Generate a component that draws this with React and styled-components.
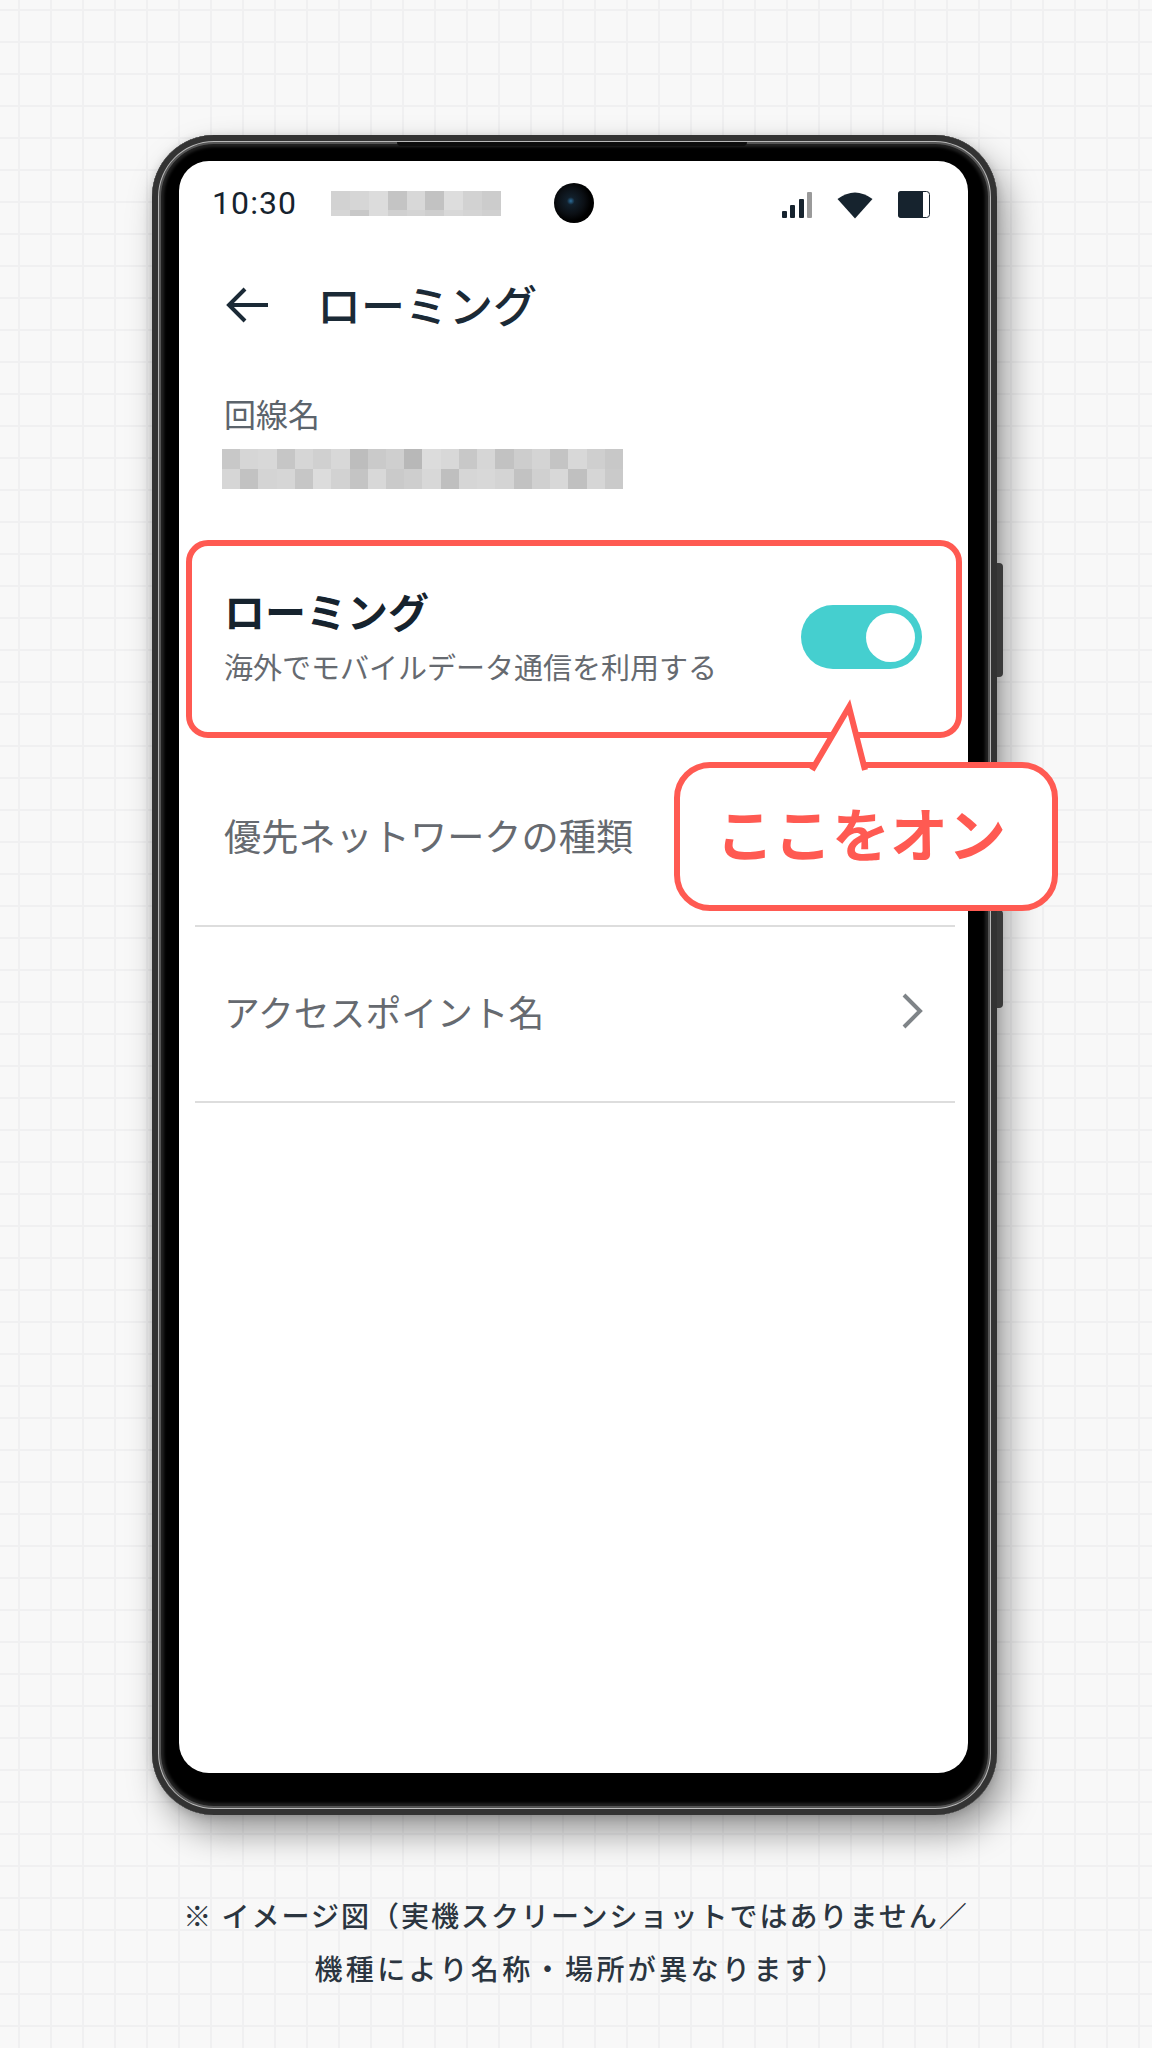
import styled, { createGlobalStyle } from "styled-components";

const JP = `"Noto Sans CJK JP", "Noto Sans", sans-serif`;
const RED = "#ff5a52";

const topShades = [
    ["#d2d2d2", "#d6d6d6", "#dcdcdc", "#c4c4c4", "#d8d8d8", "#c2c2c2", "#dddddd", "#d2d2d2", "#cccccc"],
    ["#d6d6d6", "#c8c8c8", "#dcdcdc", "#d0d0d0", "#d4d4d4", "#cecece", "#d8d8d8", "#d4d4d4", "#d0d0d0"],
];

const lineShades = [
    ["#c8c8c8", "#d6d6d6", "#d8d8d8", "#c6c6c6", "#d6d6d6", "#d0d0d0", "#d8d8d8", "#bdbdbd", "#cacaca", "#cfcfcf", "#b8b8b8", "#dcdcdc", "#d8d8d8", "#c8c8c8", "#d6d6d6", "#c2c2c2", "#cdcdcd", "#d4d4d4", "#c4c4c4", "#d8d8d8", "#cfcfcf", "#c8c8c8"],
    ["#d6d6d6", "#c2c2c2", "#d4d4d4", "#d6d6d6", "#c6c6c6", "#dcdcdc", "#d2d2d2", "#c4c4c4", "#d8d8d8", "#cacaca", "#cecece", "#d8d8d8", "#bfbfbf", "#d6d6d6", "#d8d8d8", "#d4d4d4", "#c2c2c2", "#d0d0d0", "#d8d8d8", "#c0c0c0", "#d6d6d6", "#cacaca"],
];

function Mosaic ({ rows, ...props }) {
    return (
        <MosaicGrid {...props} $cols={rows[0].length}>
            {rows.flat().map((shade, i) => <MosaicCell key={i} $shade={shade} />)}
        </MosaicGrid>
    );
};

export default function App () {
    return (
        <>
            <GlobalStyle />
            <Page>
                <Phone>
                    <EarSlit />
                    <SideButton $top={428} $height={114} />
                    <SideButton $top={775} $height={98} />
                    <Screen>
                        <StatusBar>
                            <Time>10:30</Time>
                            <CarrierMosaic rows={topShades} />
                            <Camera />
                            <StatusIcons>
                                <svg width="30" height="26" viewBox="0 0 30 26">
                                    <rect x="0" y="19" width="5" height="7" rx="1" fill="#16232e" />
                                    <rect x="8" y="13" width="5" height="13" rx="1" fill="#16232e" />
                                    <rect x="17" y="7" width="5" height="19" rx="1" fill="#16232e" />
                                    <rect x="25" y="0" width="5" height="26" rx="1" fill="#9a9a9a" />
                                </svg>
                                <svg width="36" height="28" viewBox="0 0 36 28">
                                    <path d="M18 27.5 L0.5 8 Q18 -5 35.5 8 Z" fill="#16232e" />
                                </svg>
                                <svg width="32" height="27" viewBox="0 0 32 27">
                                    <rect x="0.5" y="0.5" width="31" height="26" rx="3" fill="#fff" stroke="#16232e" />
                                    <path d="M3 0 H25 V27 H3 Q0 27 0 24 V3 Q0 0 3 0 Z" fill="#16232e" />
                                </svg>
                            </StatusIcons>
                        </StatusBar>

                        <TitleRow>
                            <svg width="42" height="36" viewBox="0 0 42 36" fill="none" stroke="#1b2a36" strokeWidth="4">
                                <path d="M42 18 H4" />
                                <path d="M19 2 L3 18 L19 34" />
                            </svg>
                            <Title>ローミング</Title>
                        </TitleRow>

                        <LineLabel>回線名</LineLabel>
                        <LineMosaic rows={lineShades} />

                        <Highlight>
                            <HighlightText>
                                <HighlightTitle>ローミング</HighlightTitle>
                                <HighlightSub>海外でモバイルデータ通信を利用する</HighlightSub>
                            </HighlightText>
                            <Toggle><Knob /></Toggle>
                        </Highlight>

                        <MenuRow $height={189} $top={6} $bottom={0}>
                            <MenuText $size={37.2}>優先ネットワークの種類</MenuText>
                        </MenuRow>
                        <MenuRow $height={176} $top={0} $bottom={6}>
                            <MenuText $size={35.8}>アクセスポイント名</MenuText>
                            <svg width="22" height="38" viewBox="0 0 22 38" fill="none" stroke="#7f8488" strokeWidth="4">
                                <path d="M3 3 L19 19 L3 35" />
                            </svg>
                        </MenuRow>
                    </Screen>

                    <Callout>
                        <CalloutTail width="70" height="76" viewBox="0 0 70 76">
                            <path d="M8 73 L45 10 L61 73" fill="#fff" stroke={RED} strokeWidth="6" strokeLinejoin="miter" strokeMiterlimit="12" />
                        </CalloutTail>
                        <CalloutText>ここをオン</CalloutText>
                    </Callout>
                </Phone>

                <Caption>
                    <CaptionLine $spacing={2} $indent={0}>※ イメージ図（実機スクリーンショットではありません／</CaptionLine>
                    <CaptionLine $spacing={3.4} $indent={10}>機種により名称・場所が異なります）</CaptionLine>
                </Caption>
            </Page>
        </>
    );
};

const GlobalStyle = createGlobalStyle`
    html, body {
        margin: 0;
        padding: 0;
        background: #f8f8f8;
    }

    * {
        box-sizing: border-box;
    }
`;

const Page = styled.div`
    width: 1152px;
    height: 2048px;
    padding-top: 135px;
    padding-left: 152px;
    overflow: hidden;
    font-family: ${JP};
    background-color: #f8f8f8;
    background-image:
        linear-gradient(to right, #f0f0f1 2px, transparent 2px),
        linear-gradient(to bottom, #f0f0f1 2px, transparent 2px);
    background-size: 32px 32px;
    background-position: 18px 9px;
`;

const Phone = styled.div`
    position: relative;
    width: 845px;
    height: 1680px;
    padding: 26px 29px 42px 27px;
    border-radius: 62px;
    background: #000;
    box-shadow:
        inset 0 0 0 6px #333,
        inset 0 0 0 7px #b8b8b8,
        inset 0 0 0 9px #555,
        inset 0 0 3px 12px #222,
        10px 18px 34px rgba(0, 0, 0, 0.38),
        0 2px 10px rgba(0, 0, 0, 0.16);
`;

const EarSlit = styled.div`
    position: absolute;
    top: 7px;
    left: 245px;
    width: 350px;
    height: 4px;
    border-radius: 0 0 6px 6px;
    background: #0c0c0c;
`;

const SideButton = styled.div`
    position: absolute;
    top: ${(p) => p.$top}px;
    right: -6px;
    width: 6px;
    height: ${(p) => p.$height}px;
    border-radius: 0 4px 4px 0;
    background: #3a3a3a;
`;

const Screen = styled.div`
    width: 789px;
    height: 1612px;
    border-radius: 30px;
    background: #fff;
`;

const StatusBar = styled.div`
    display: flex;
    align-items: center;
    height: 84px;
    padding: 0 38px 0 33px;
`;

const Time = styled.div`
    width: 84px;
    font-family: Roboto, sans-serif;
    font-size: 32px;
    letter-spacing: 1.1px;
    color: #16232e;
`;

const MosaicGrid = styled.div`
    display: grid;
    grid-template-columns: repeat(${(p) => p.$cols}, 1fr);
    overflow: hidden;
`;

const MosaicCell = styled.div`
    background: ${(p) => p.$shade};
`;

const CarrierMosaic = styled(Mosaic)`
    grid-template-rows: 19px 6px;
    width: 170px;
    height: 25px;
    margin-left: 35px;
`;

const Camera = styled.div`
    width: 40px;
    height: 40px;
    margin-left: 53px;
    border-radius: 50%;
    background: radial-gradient(circle at 42% 45%, #2c6e9c 0, #12202c 12%, #0b0f14 42%, #000 62%);
`;

const StatusIcons = styled.div`
    display: flex;
    align-items: center;
    gap: 25px;
    margin-left: auto;
    margin-top: 3px;
`;

const TitleRow = styled.div`
    display: flex;
    align-items: center;
    gap: 49px;
    height: 60px;
    margin-top: 30px;
    padding-left: 47px;
`;

const Title = styled.h1`
    margin: -3px 0 0;
    font-size: 44px;
    font-weight: 500;
    line-height: 60px;
    color: #1b2a36;
`;

const LineLabel = styled.div`
    height: 40px;
    margin-top: 58px;
    padding-left: 45px;
    font-size: 32px;
    line-height: 40px;
    color: #5c646c;
`;

const LineMosaic = styled(Mosaic)`
    grid-template-rows: 20px 20px;
    width: 401px;
    height: 40px;
    margin: 16px 0 0 43px;
`;

const Highlight = styled.div`
    display: flex;
    align-items: center;
    justify-content: space-between;
    width: 776px;
    height: 198px;
    margin: 51px 0 0 7px;
    padding: 0 34px 4px 32px;
    border: 6px solid ${RED};
    border-radius: 22px;
`;

const HighlightText = styled.div`
    margin-top: -6px;
`;

const HighlightTitle = styled.div`
    font-size: 41px;
    font-weight: 700;
    line-height: 56px;
    color: #16232e;
`;

const HighlightSub = styled.div`
    margin-top: 8px;
    font-size: 29px;
    line-height: 40px;
    color: #666a70;
`;

const Toggle = styled.div`
    display: flex;
    align-items: center;
    justify-content: flex-end;
    width: 121px;
    height: 64px;
    padding-right: 7px;
    border-radius: 32px;
    background: #45cfcf;
`;

const Knob = styled.div`
    width: 49px;
    height: 49px;
    border-radius: 50%;
    background: #fff;
`;

const MenuRow = styled.div`
    display: flex;
    align-items: center;
    justify-content: space-between;
    width: 760px;
    height: ${(p) => p.$height}px;
    margin-left: 16px;
    padding: ${(p) => p.$top}px 32px ${(p) => p.$bottom}px 29px;
    border-bottom: 2px solid #dddddd;
`;

const MenuText = styled.div`
    font-size: ${(p) => p.$size}px;
    line-height: 50px;
    color: #666a70;
`;

const Callout = styled.div`
    position: absolute;
    top: 627px;
    left: 522px;
    display: flex;
    align-items: center;
    justify-content: center;
    width: 384px;
    height: 149px;
    padding: 0 10px 10px 0;
    border: 6px solid ${RED};
    border-radius: 36px;
    background: #fff;
`;

const CalloutTail = styled.svg`
    position: absolute;
    top: -71px;
    left: 124px;
`;

const CalloutText = styled.div`
    font-size: 58px;
    font-weight: 700;
    line-height: 70px;
    color: ${RED};
`;

const Caption = styled.div`
    margin-top: 74px;
    text-align: center;
    width: 848px;
`;

const CaptionLine = styled.div`
    padding-left: ${(p) => p.$indent}px;
    font-size: 28px;
    font-weight: 500;
    line-height: 53px;
    letter-spacing: ${(p) => p.$spacing}px;
    color: #2b3540;
`;
